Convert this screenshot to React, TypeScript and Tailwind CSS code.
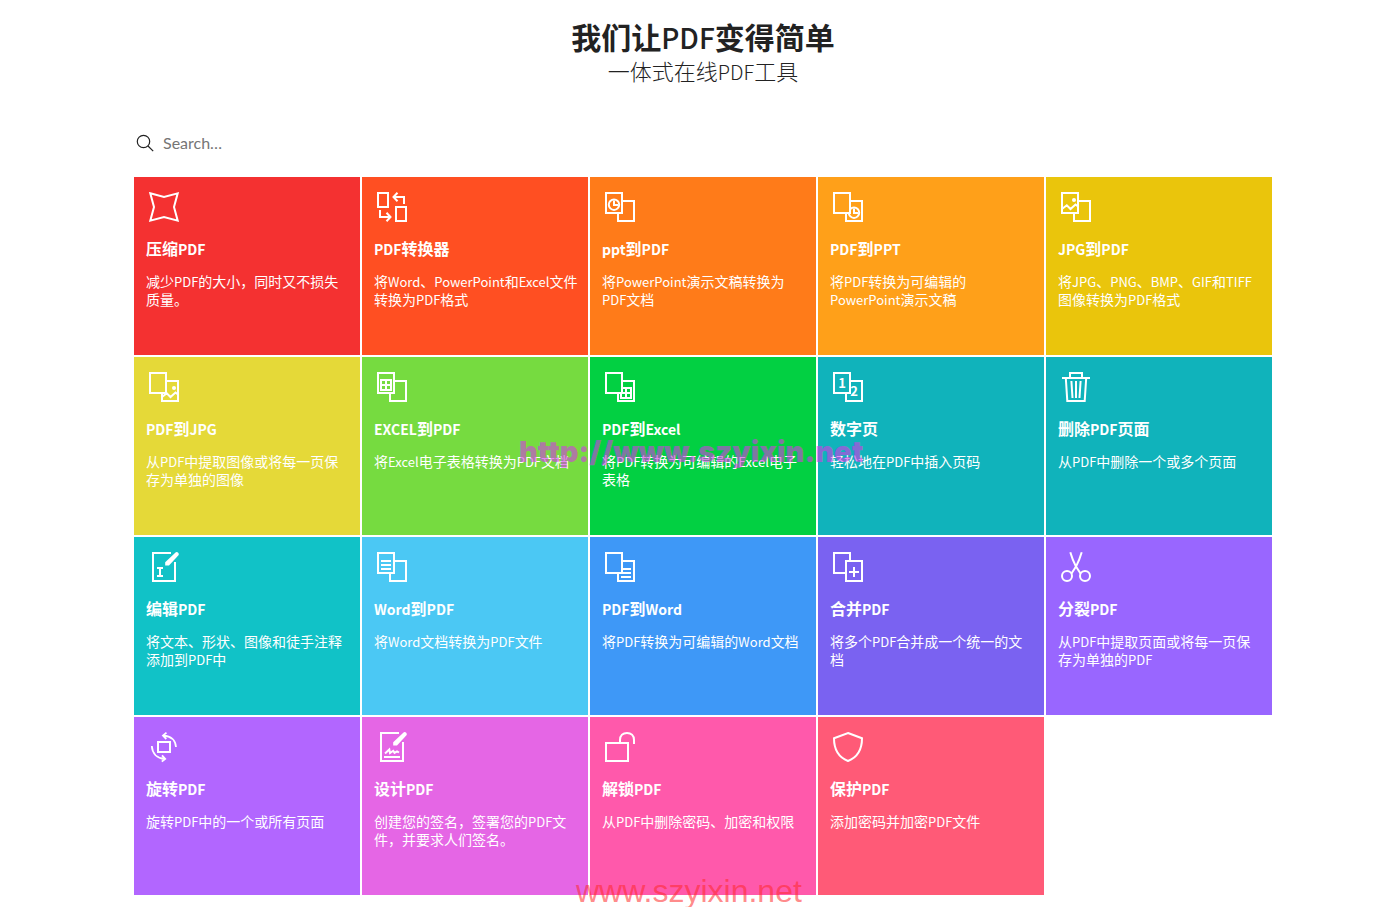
import type { ReactNode } from "react";

const visibleBack = "M18 0H30V30H0V22H18Z";

function Icon({ children }: { children: ReactNode }) {
  return (
    <svg
      className="size-9"
      viewBox="-3 -3 36 36"
      fill="none"
      stroke="currentColor"
      strokeWidth="2"
      aria-hidden="true"
    >
      {children}
    </svg>
  );
}

/* Two overlapping sheets, the left one in front; the mark sits on either sheet. */
function Pages({ front, back, clip }: { front?: ReactNode; back?: ReactNode; clip?: string }) {
  return (
    <Icon>
      <rect x="1" y="1" width="16" height="20" />
      <path d="M18 9H29V29H13V22" />
      {front}
      {back && (
        <>
          <clipPath id={clip}>
            <path d={visibleBack} />
          </clipPath>
          <g clipPath={`url(#${clip})`}>
            <g transform="translate(12 8)">{back}</g>
          </g>
        </>
      )}
    </Icon>
  );
}

/* Latin runs are set one step smaller than the Chinese text around them. */
function Mixed({ text, latin }: { text: string; latin: string }) {
  return (
    <>
      {text.split(/([A-Za-z]+)/).map((run, i) =>
        i % 2 === 1 ? (
          <span key={i} className={latin}>
            {run}
          </span>
        ) : (
          run
        ),
      )}
    </>
  );
}

const clock = (
  <>
    <circle cx="9" cy="12.7" r="5.2" />
    <path d="M9 8.5V13H13" />
  </>
);
const photo = (
  <>
    <path d="M1 17L5.8 13.3L9.5 17L14.5 12.5L17 14.5" />
    <circle cx="13" cy="8" r="2" fill="currentColor" stroke="none" />
  </>
);
const sheet = <path d="M4 8H14V18H4ZM9 8V18M4 13H14" />;
const lines = <path d="M4 9H14M4 13H14M4 17H14" />;
const pen = (
  <path d="M26.8 .3Q27.8 -.6 29 .5T29.7 3L20 13.6H16.2V10.2Z" fill="currentColor" stroke="none" />
);

const digit = (n: string, x: number, y: number) => (
  <text
    x={x}
    y={y}
    textAnchor="middle"
    fill="currentColor"
    stroke="none"
    className="font-['Noto_Sans_CJK_SC',sans-serif] text-[13px] font-bold"
  >
    {n}
  </text>
);

type Tool = { title: string; text: string; bg: string; icon: ReactNode };

const tools: Tool[] = [
  {
    title: "压缩PDF",
    text: "减少PDF的大小，同时又不损失质量。",
    bg: "bg-[#f43131]",
    icon: (
      <Icon>
        <path d="M1.3 1.3L15 5L28.7 1.3L25 15L28.7 28.7L15 25L1.3 28.7L5 15Z" />
      </Icon>
    ),
  },
  {
    title: "PDF转换器",
    text: "将Word、PowerPoint和Excel文件转换为PDF格式",
    bg: "bg-[#ff4f22]",
    icon: (
      <Icon>
        <rect x="1" y="1" width="10" height="14" />
        <rect x="19" y="15" width="10" height="14" />
        <path d="M27 12V5H17M20.5 .8L16.5 5L20.5 9.2" />
        <path d="M3 18V25H13M9.5 20.8L13.5 25L9.5 29.2" />
      </Icon>
    ),
  },
  {
    title: "ppt到PDF",
    text: "将PowerPoint演示文稿转换为PDF文档",
    bg: "bg-[#ff7b19]",
    icon: <Pages front={clock} />,
  },
  {
    title: "PDF到PPT",
    text: "将PDF转换为可编辑的PowerPoint演示文稿",
    bg: "bg-[#ffa019]",
    icon: <Pages back={clock} clip="clip-ppt" />,
  },
  {
    title: "JPG到PDF",
    text: "将JPG、PNG、BMP、GIF和TIFF图像转换为PDF格式",
    bg: "bg-[#eac50c]",
    icon: <Pages front={photo} />,
  },
  {
    title: "PDF到JPG",
    text: "从PDF中提取图像或将每一页保存为单独的图像",
    bg: "bg-[#e5d938]",
    icon: <Pages back={photo} clip="clip-jpg" />,
  },
  {
    title: "EXCEL到PDF",
    text: "将Excel电子表格转换为PDF文档",
    bg: "bg-[#76db40]",
    icon: <Pages front={sheet} />,
  },
  {
    title: "PDF到Excel",
    text: "将PDF转换为可编辑的Excel电子表格",
    bg: "bg-[#02d042]",
    icon: <Pages back={sheet} clip="clip-excel" />,
  },
  {
    title: "数字页",
    text: "轻松地在PDF中插入页码",
    bg: "bg-[#10b3bb]",
    icon: <Pages front={digit("1", 9, 16)} back={digit("2", 9, 16)} clip="clip-number" />,
  },
  {
    title: "删除PDF页面",
    text: "从PDF中删除一个或多个页面",
    bg: "bg-[#10b3bb]",
    icon: (
      <Icon>
        <path d="M1 6H29M9 6V1H21V6M4.8 6L6.3 29H23.7L25.2 6M10.4 9L11.5 26M15 9V26M19.6 9L18.5 26" />
      </Icon>
    ),
  },
  {
    title: "编辑PDF",
    text: "将文本、形状、图像和徒手注释添加到PDF中",
    bg: "bg-[#11c2c7]",
    icon: (
      <Icon>
        <path d="M22 1H4V29H26V10M8 16H14M8 24H14M11 16V24" />
        {pen}
      </Icon>
    ),
  },
  {
    title: "Word到PDF",
    text: "将Word文档转换为PDF文件",
    bg: "bg-[#4bc8f4]",
    icon: <Pages front={lines} />,
  },
  {
    title: "PDF到Word",
    text: "将PDF转换为可编辑的Word文档",
    bg: "bg-[#3e98f7]",
    icon: <Pages back={lines} clip="clip-word" />,
  },
  {
    title: "合并PDF",
    text: "将多个PDF合并成一个统一的文档",
    bg: "bg-[#7a62f1]",
    icon: (
      <Icon>
        <rect x="13" y="9" width="16" height="20" />
        <path d="M17 8V1H1V21H12M21 15V25M16 20H26" />
      </Icon>
    ),
  },
  {
    title: "分裂PDF",
    text: "从PDF中提取页面或将每一页保存为单独的PDF",
    bg: "bg-[#9966ff]",
    icon: (
      <Icon>
        <circle cx="6" cy="24" r="5" />
        <circle cx="24" cy="24" r="5" />
        <path d="M9.3 .3Q11.5 8 15 14.6L19.5 21.5M20.7 .3Q18.5 8 15 14.6L10.5 21.5" />
      </Icon>
    ),
  },
  {
    title: "旋转PDF",
    text: "旋转PDF中的一个或所有页面",
    bg: "bg-[#b266ff]",
    icon: (
      <Icon>
        <rect x="9" y="10" width="12" height="10" />
        <path d="M14.5 3.5C22 4 26.5 8.5 27 15M17.5 .6L14 3.6L17.3 7" strokeWidth="1.8" />
        <path d="M2.8 14C3.3 21.5 8 26.3 15.5 26.8M13 23.4L16.2 26.8L12.8 29.6" strokeWidth="1.8" />
      </Icon>
    ),
  },
  {
    title: "设计PDF",
    text: "创建您的签名，签署您的PDF文件，并要求人们签名。",
    bg: "bg-[#e566e5]",
    icon: (
      <Icon>
        <path d="M22 1H4V29H26V10M7 25H23" />
        <path d="M8 21.5L12.3 17.5L13 21L16.2 18.8L17.5 20.8L20 19.3L22 20.5" />
        {pen}
      </Icon>
    ),
  },
  {
    title: "解锁PDF",
    text: "从PDF中删除密码、加密和权限",
    bg: "bg-[#ff59ab]",
    icon: (
      <Icon>
        <path d="M1 11H23V29H1ZM15 11V8C15 3.5 18 1 22 1S29 3.5 29 8V12" />
      </Icon>
    ),
  },
  {
    title: "保护PDF",
    text: "添加密码并加密PDF文件",
    bg: "bg-[#ff5a77]",
    icon: (
      <Icon>
        <path d="M15 1L29 6.3C29 17.5 24 25.5 15 29C6 25.5 1 17.5 1 6.3Z" />
      </Icon>
    ),
  },
];

export default function App() {
  return (
    <main
      lang="zh-CN"
      className="relative bg-white pt-[18px] pb-3 pl-[27px] font-['Noto_Sans_CJK_SC',sans-serif] text-[#222]"
    >
      <div className="mx-auto max-w-[1138px]">
        <header className="text-center">
          <h1 className="text-[30px] leading-9 font-bold">
            <Mixed text="我们让PDF变得简单" latin="text-[28px] leading-none font-medium" />
          </h1>
          <h2 className="text-[22px] leading-8 font-light">
            <Mixed text="一体式在线PDF工具" latin="text-[20px] leading-none" />
          </h2>
        </header>

        <label className="mt-[41px] flex h-8 items-center gap-2 pl-[2px]">
          <svg className="size-[19px]" viewBox="0 0 19 19" fill="none" stroke="#222" strokeWidth="1.2" aria-hidden="true">
            <circle cx="7.5" cy="7.5" r="6.2" />
            <path d="M12 12L17.2 17.2" />
          </svg>
          <input
            type="search"
            aria-label="Search"
            placeholder="Search…"
            className="min-w-0 flex-1 bg-transparent font-[Lato,sans-serif] text-base outline-none placeholder:text-[#757575]"
          />
        </label>

        <div className="mt-[18px] grid grid-cols-5 gap-[2px]">
          {tools.map((tool) => (
            <a key={tool.title} href="#" className={`min-h-[178px] py-3 pr-[9px] pl-3 text-white ${tool.bg}`}>
              {tool.icon}
              <h3 className="mt-[11px] text-base leading-6 font-bold">
                <Mixed text={tool.title} latin="text-[14px] leading-none" />
              </h3>
              <p className="mt-3 text-sm leading-[18px]">
                <Mixed text={tool.text} latin="text-[13px] leading-none" />
              </p>
            </a>
          ))}
        </div>
      </div>

      <div className="pointer-events-none absolute top-[432px] left-[519px] font-[Inter,sans-serif] text-[29px] leading-10 font-black whitespace-nowrap text-[#d43be6]/60">
        http://www.szyixin.net
      </div>
      <div className="pointer-events-none absolute top-[871px] left-[576px] font-['Liberation_Sans',sans-serif] text-[32px] leading-10 whitespace-nowrap text-[#ff2828]/55">
        www.szyixin.net
      </div>
    </main>
  );
}
